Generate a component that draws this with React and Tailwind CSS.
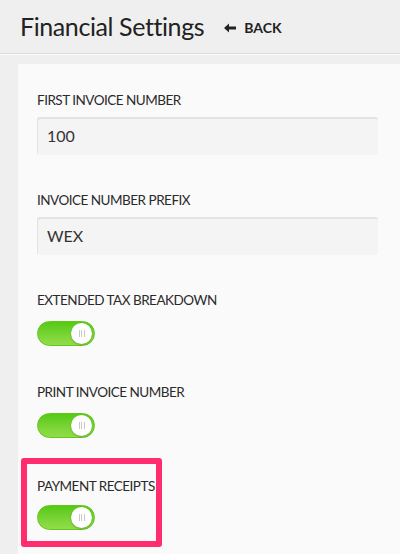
const font = { fontFamily: '"Lato", "Open Sans", sans-serif' };

const Toggle = () => (
  <div className="relative h-[25px] w-[58px] rounded-full border border-[#62c81c] bg-gradient-to-b from-[#55c912] to-[#92dd48]">
    <div className="absolute right-[2px] top-[1px] flex h-[21px] w-[21px] items-center justify-center gap-[1.5px] rounded-full bg-white shadow-[0_1px_2px_rgba(0,0,0,0.25)]">
      <span className="h-[7px] w-px bg-[#c8c8c8]" />
      <span className="h-[7px] w-px bg-[#c8c8c8]" />
      <span className="h-[7px] w-px bg-[#c8c8c8]" />
    </div>
  </div>
);

const Label = ({ children, className = '' }) => (
  <div className={`text-[13.5px] leading-[20px] tracking-[-0.5px] text-[#2a2a2a] ${className}`}>{children}</div>
);

const Field = ({ label, value }) => (
  <div className="mb-[35px]">
    <Label className="mb-[7px]">{label}</Label>
    <div className="flex h-[38px] items-center rounded-[3px] bg-[#f4f4f4] px-[10px] text-[16px] text-[#333] shadow-[inset_1px_2px_0_#e3e3e3]">
      {value}
    </div>
  </div>
);

const ToggleField = ({ label }) => (
  <div className="mb-[36px]">
    <Label className="mb-[11px]">{label}</Label>
    <Toggle />
  </div>
);

export default function App() {
  return (
    <div className="h-[554px] w-[400px] overflow-hidden bg-[#efefef]" style={font}>
      <div className="flex h-[54px] items-center border-b border-[#dcdcdc] px-5 shadow-[0_1px_0_#fafafa]">
        <h1 className="text-[25px] font-normal tracking-[-0.4px] text-[#222]">Financial Settings</h1>
        <div className="ml-[20px] mt-[2px] flex items-center gap-[8px] text-[14px] font-bold text-[#222]">
          <svg width="12" height="10" viewBox="0 0 12 10">
            <path d="M0 5 L5 0.5 L5 3.5 L12 3.5 L12 6.5 L5 6.5 L5 9.5 Z" fill="#222" />
          </svg>
          BACK
        </div>
      </div>
      <div className="pl-[18px] pt-[10px]">
        <div className="bg-[#fafafa] pb-[60px] pl-[19px] pr-[22px] pt-[26px]">
          <Field label="FIRST INVOICE NUMBER" value="100" />
          <Field label="INVOICE NUMBER PREFIX" value="WEX" />
          <ToggleField label="EXTENDED TAX BREAKDOWN" />
          <ToggleField label="PRINT INVOICE NUMBER" />
          <div className="relative pt-[2px]">
            <div className="absolute left-[-16px] top-[-16px] h-[89px] w-[141px] rounded-[3px] border-[6px] border-[#ff2d6d]" />
            <Label className="mb-[9px]">PAYMENT RECEIPTS</Label>
            <Toggle />
          </div>
        </div>
      </div>
    </div>
  );
}
